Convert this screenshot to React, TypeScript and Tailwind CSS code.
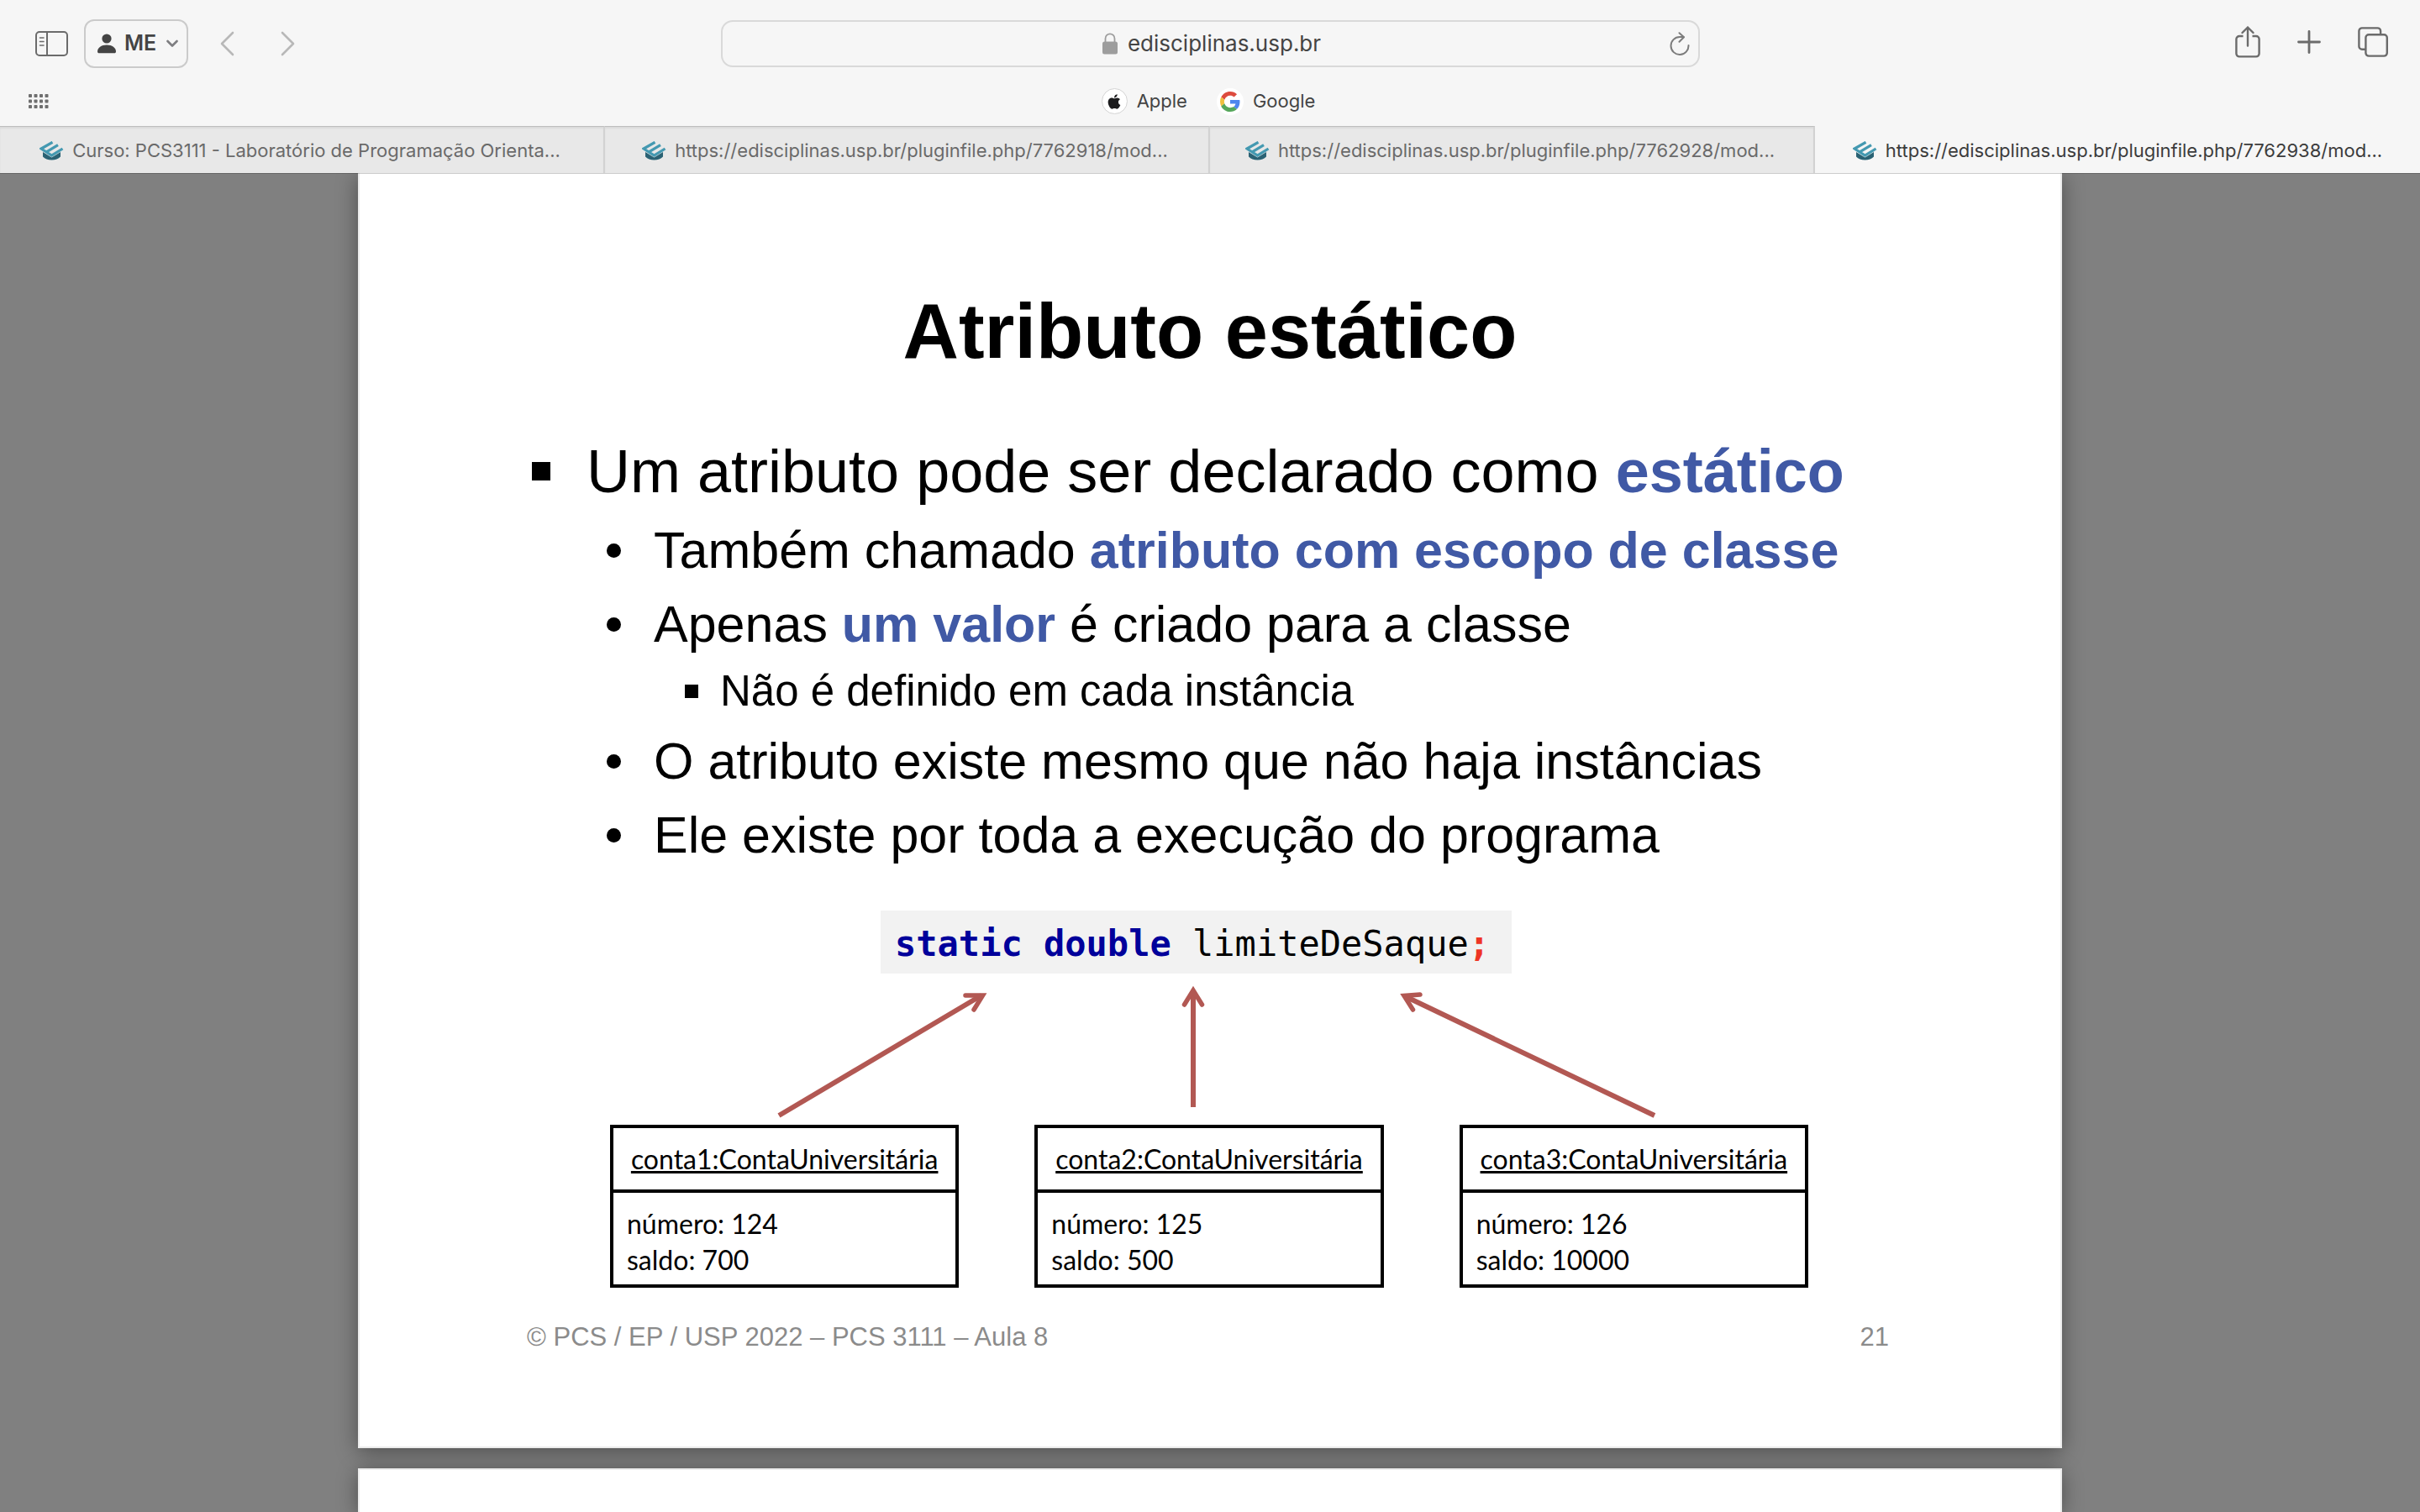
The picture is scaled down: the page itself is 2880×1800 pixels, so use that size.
import type { ReactNode } from 'react';

const tabs = [
  { title: 'Curso: PCS3111 - Laboratório de Programação Orienta...', active: false },
  { title: 'https://edisciplinas.usp.br/pluginfile.php/7762918/mod...', active: false },
  { title: 'https://edisciplinas.usp.br/pluginfile.php/7762928/mod...', active: false },
  { title: 'https://edisciplinas.usp.br/pluginfile.php/7762938/mod...', active: true },
];

const accounts = [
  { name: 'conta1:ContaUniversitária', numero: 124, saldo: 700 },
  { name: 'conta2:ContaUniversitária', numero: 125, saldo: 500 },
  { name: 'conta3:ContaUniversitária', numero: 126, saldo: 10000 },
];

function SidebarIcon() {
  return (
    <svg width="39" height="30" viewBox="0 0 39 30" fill="none" stroke="#6b6b6b" strokeWidth="2" strokeLinecap="round">
      <rect x="1" y="1" width="37" height="28" rx="4" />
      <path d="M14 1v28" />
      <path d="M5.5 8h4.5M5.5 12.500h4.500M5.500 17h4.500" strokeWidth="1.600" />
    </svg>
  );
}

function PersonIcon() {
  return (
    <svg width="22" height="24" viewBox="0 0 22 24" fill="#444">
      <circle cx="11" cy="6" r="5.600" />
      <path d="M0 21.500C0 17 4.500 13.600 11 13.600S22 17 22 21.500c0 1.200-.8 1.800-2 1.800H2c-1.200 0-2-.6-2-1.800z" />
    </svg>
  );
}

function SmallChevron() {
  return (
    <svg width="14" height="10" viewBox="0 0 14 10" fill="none" stroke="#7d7d80" strokeWidth="2.600" strokeLinecap="round" strokeLinejoin="round">
      <path d="M1.500 2 7 7.500 12.500 2" />
    </svg>
  );
}

function NavChevron({ forward = false }: { forward?: boolean }) {
  return (
    <svg width="17" height="30" viewBox="0 0 17 30" fill="none" stroke="#b8b8b8" strokeWidth="2.600" strokeLinecap="round" strokeLinejoin="round">
      <path d={forward ? 'M2 2l13 13L2 28' : 'M15 2 2 15l13 13'} />
    </svg>
  );
}

function LockIcon() {
  return (
    <svg width="18" height="26" viewBox="0 0 18 26">
      <rect x="0" y="10.500" width="18" height="15" rx="2.500" fill="#9d9d9d" />
      <path d="M3.500 11V7a5.500 5.700 0 0 1 11 0v4" fill="none" stroke="#9d9d9d" strokeWidth="1.800" />
    </svg>
  );
}

function ReloadIcon() {
  return (
    <svg width="24" height="28" viewBox="0 0 24 28" fill="none" stroke="#7c7c7c" strokeWidth="2" strokeLinecap="round" strokeLinejoin="round">
      <path d="M22.500 16A10.500 10.500 0 1 1 12 6h4.500" />
      <path d="M11.500 1.200 17 6.300l-5.500 5.500" />
    </svg>
  );
}

function ShareIcon() {
  return (
    <svg width="30" height="38" viewBox="0 0 30 38" fill="none" stroke="#6b6b6b" strokeWidth="2.400" strokeLinecap="round" strokeLinejoin="round">
      <path d="M9.500 12H5a3.600 3.600 0 0 0-3.600 3.600v17.200A3.600 3.600 0 0 0 5 36.400h20a3.600 3.600 0 0 0 3.600-3.600V15.600A3.600 3.600 0 0 0 25 12h-4.500" strokeLinecap="butt" />
      <path d="M15 23.500V1.500M8.500 8 15 1.500 21.500 8" />
    </svg>
  );
}

function PlusIcon() {
  return (
    <svg width="28" height="28" viewBox="0 0 28 28" fill="none" stroke="#6b6b6b" strokeWidth="2.800" strokeLinecap="round">
      <path d="M14 1.500v25M1.500 14h25" />
    </svg>
  );
}

function OverviewIcon() {
  return (
    <svg width="36" height="36" viewBox="0 0 36 36" fill="none" stroke="#6b6b6b" strokeWidth="2.400">
      <path d="M9 26.800H5a3.600 3.600 0 0 1-3.600-3.600V5A3.600 3.600 0 0 1 5 1.400h18.500A3.600 3.600 0 0 1 27.100 5v4" />
      <rect x="9.400" y="9.200" width="25.400" height="25.400" rx="3.600" />
    </svg>
  );
}

function BookmarksGridIcon() {
  return (
    <svg width="24" height="18" viewBox="0 0 24 18" fill="#6f6f6f">
      {[0, 6.5, 13, 19.5].map((x) =>
        [0, 6.5, 13].map((y) => <rect key={`${x}-${y}`} x={x} y={y} width="4" height="4" rx="0.800" />),
      )}
    </svg>
  );
}

function AppleIcon() {
  return (
    <span className="flex size-[31px] items-center justify-center rounded-full border border-[#d4d4d4] bg-white">
      <svg width="16" height="20" viewBox="0 0 384 512" fill="#1b1b1d">
        <path d="M318.700 268.700c-.2-36.700 16.400-64.400 50-84.800-18.800-26.900-47.200-41.700-84.700-44.600-35.500-2.800-74.300 20.700-88.500 20.700-15 0-49.400-19.700-76.400-19.700C63.300 141.200 4 184.800 4 273.500q0 39.300 14.400 81.200c12.800 36.700 59 126.700 107.200 125.200 25.200-.6 43-17.900 75.800-17.900 31.800 0 48.300 17.900 76.400 17.900 48.600-.7 90.400-82.500 102.600-119.300-65.200-30.700-61.700-90-61.700-91.900zm-56.600-164.200c27.300-32.400 24.800-61.900 24-72.500-24.100 1.400-52 16.400-67.900 34.900-17.500 19.800-27.800 44.300-25.600 71.900 26.100 2 49.900-11.400 69.500-34.300z" />
      </svg>
    </span>
  );
}

function GoogleIcon() {
  return (
    <span className="flex size-8 items-center justify-center rounded-full bg-white">
      <svg width="24" height="24" viewBox="0 0 48 48">
        <path fill="#dd4b3e" d="M24 9.500c3.540 0 6.710 1.220 9.210 3.600l6.850-6.850C35.900 2.380 30.470 0 24 0 14.620 0 6.510 5.380 2.560 13.220l7.980 6.190C12.430 13.720 17.740 9.500 24 9.500z" />
        <path fill="#4e86ee" d="M46.980 24.550c0-1.570-.15-3.090-.38-4.550H24v9.020h12.940c-.58 2.960-2.260 5.480-4.780 7.180l7.730 6c4.510-4.180 7.090-10.360 7.090-17.650z" />
        <path fill="#efbf3e" d="M10.530 28.590c-.48-1.450-.76-2.990-.76-4.590s.27-3.140.76-4.590l-7.980-6.190C.92 16.460 0 20.120 0 24c0 3.880.92 7.540 2.560 10.780l7.970-6.190z" />
        <path fill="#55a65a" d="M24 48c6.480 0 11.930-2.130 15.890-5.810l-7.730-6c-2.150 1.450-4.920 2.300-8.160 2.300-6.260 0-11.570-4.220-13.470-9.910l-7.980 6.190C6.510 42.620 14.620 48 24 48z" />
      </svg>
    </span>
  );
}

function SiteIcon() {
  return (
    <svg className="shrink-0" width="29" height="23" viewBox="0 0 29 23">
      <path d="M4 13v5.500C6.500 21.400 10 22.500 14.500 22.500s8-1.100 10.500-4V13l-10.500 6.500z" fill="#2a6274" />
      <path d="M15.500 1.300 2 9l12.500 8.200L27.500 9M8.300 12.900 22 4.600" fill="none" stroke="#4499b1" strokeWidth="3.200" />
    </svg>
  );
}

function Chrome() {
  return (
    <header className="relative z-10 bg-[#f6f6f6] font-['Inter',sans-serif] text-[#444] shadow-[0_1px_0_rgba(0,0,0,0.2)]">
      <div className="grid h-[104px] grid-cols-[1fr_minmax(0,1165px)_1fr] items-center">
        <div className="flex items-center pb-px pl-[42px]">
          <button aria-label="Barra lateral"><SidebarIcon /></button>
          <button className="ml-[19px] flex h-[58px] items-center rounded-xl border-2 border-[#cbcbcb] pr-2.5 pl-3.5 text-[25px] font-semibold">
            <PersonIcon />
            <span className="mr-3 ml-2.5">ME</span>
            <SmallChevron />
          </button>
          <button aria-label="Voltar" className="ml-[38px]"><NavChevron /></button>
          <button aria-label="Avançar" className="ml-[55px]"><NavChevron forward /></button>
        </div>
        <div className="grid h-14 grid-cols-[1fr_auto_1fr] items-center rounded-[14px] border-2 border-[#d9d9d9] px-2.5">
          <label className="col-start-2 flex items-center gap-3 pl-1">
            <LockIcon />
            <input aria-label="Endereço" defaultValue="edisciplinas.usp.br" className="field-sizing-content bg-transparent text-[26px] leading-8 outline-none" />
          </label>
          <button aria-label="Recarregar" className="justify-self-end"><ReloadIcon /></button>
        </div>
        <div className="flex items-center justify-end gap-11 pr-[38px] pb-1">
          <button aria-label="Compartilhar"><ShareIcon /></button>
          <button aria-label="Nova aba"><PlusIcon /></button>
          <button aria-label="Visão geral das abas"><OverviewIcon /></button>
        </div>
      </div>
      <nav className="grid h-[46px] grid-cols-[1fr_auto_1fr] items-center pr-[38px] pb-4 pl-[34px] text-[22px]">
        <button aria-label="Favoritos" className="justify-self-start"><BookmarksGridIcon /></button>
        <div className="flex items-center gap-[35px]">
          <a href="#apple" className="flex items-center gap-[11px]"><AppleIcon />Apple</a>
          <a href="#google" className="flex items-center gap-[11px]"><GoogleIcon />Google</a>
        </div>
      </nav>
      <div role="tablist" className="grid h-14 grid-cols-4 text-[22px]">
        {tabs.map((tab) => (
          <button
            key={tab.title}
            role="tab"
            aria-selected={tab.active}
            className={
              tab.active
                ? 'flex min-w-0 items-center justify-center gap-2.5 px-8 pt-0.5 text-[#3c3c3c]'
                : 'flex min-w-0 items-center justify-center gap-2.5 border-t border-r-2 border-t-[#bdbdbd] border-r-[#d2d2d2] bg-[#e8e8e8] pt-px pr-8 pl-7 text-[#6a6a6a] shadow-[inset_0_2px_2px_rgba(0,0,0,0.06)]'
            }
          >
            <SiteIcon />
            <span className="truncate">{tab.title}</span>
          </button>
        ))}
      </div>
    </header>
  );
}

function Key({ children }: { children: ReactNode }) {
  return <strong className="font-bold text-[#4059a5]">{children}</strong>;
}

function Point({ children }: { children: ReactNode }) {
  return (
    <div className="flex items-center gap-[39px] pl-[294px] text-[61px] leading-[88px]">
      <span className="size-[17px] shrink-0 rounded-full bg-black" />
      <p>{children}</p>
    </div>
  );
}

function Arrows() {
  return (
    <svg className="block w-full" viewBox="0 0 1426 180" fill="none" stroke="#b25853" strokeWidth="6">
      <path d="M201 169 442 26M694 159V24M1243 169 948 28" />
      <g strokeWidth="5.500" strokeLinecap="round" strokeMiterlimit="8">
        <path d="M423 26h20.500L433 43" />
        <path d="M683.500 37 694 20l10.500 17" />
        <path d="M964 25l-19 1.500L955.500 43" />
      </g>
    </svg>
  );
}

function Slide() {
  return (
    <article className="mx-auto w-full max-w-[2028px] shrink-0 border-2 border-t-0 border-[#ececec] bg-white pt-[138px] pb-[110px] font-['Liberation_Sans',Arial,sans-serif] text-black shadow-[0_4px_24px_rgba(0,0,0,0.4)]">
      <h1 className="text-center text-[92px] leading-[100px] font-bold">Atributo estático</h1>
      <ul className="mt-[75px]">
        <li>
          <div className="mb-2 flex items-center gap-[43px] pl-[205px] text-[72px] leading-[84px]">
            <span className="size-[22px] shrink-0 bg-black" />
            <p>Um atributo pode ser declarado como <Key>estático</Key></p>
          </div>
          <ul>
            <li><Point>Também chamado <Key>atributo com escopo de classe</Key></Point></li>
            <li>
              <Point>Apenas <Key>um valor</Key> é criado para a classe</Point>
              <ul>
                <li className="mb-1 flex items-center gap-[26px] pl-[387px] text-[51px] leading-[71px]">
                  <span className="size-4 shrink-0 bg-black" />
                  <p>Não é definido em cada instância</p>
                </li>
              </ul>
            </li>
            <li><Point>O atributo existe mesmo que não haja instâncias</Point></li>
            <li><Point>Ele existe por toda a execução do programa</Point></li>
          </ul>
        </li>
      </ul>
      <section className="mt-[46px] pr-[300px] pl-[298px]">
        <pre className="ml-[322px] w-fit bg-[#f2f2f2] pt-1 pr-[26px] pl-[17px] font-['DejaVu_Sans_Mono',monospace] text-[42px] leading-[71px]">
          <code className="font-['DejaVu_Sans_Mono',monospace]"><b className="text-[#00009b]">static double</b> limiteDeSaque<b className="text-[#ee3524]">;</b></code>
        </pre>
        <Arrows />
        <div className="grid grid-cols-3 gap-[90px] font-['Lato',sans-serif] text-[32px]">
          {accounts.map((account) => (
            <div key={account.name} className="border-4 border-black">
              <h2 className="border-b-4 border-black text-center leading-[73px] underline decoration-3 underline-offset-2 [text-decoration-skip-ink:none]">{account.name}</h2>
              <div className="px-4 pt-[15px] pb-2 leading-[43px]">
                <p>número: {account.numero}</p>
                <p>saldo: {account.saldo}</p>
              </div>
            </div>
          ))}
        </div>
      </section>
      <footer className="mt-[39px] flex justify-between pr-[204px] pl-[199px] text-[31px] leading-10 text-[#8b8b8b]">
        <span>© PCS / EP / USP 2022 – PCS 3111 – Aula 8</span>
        <span>21</span>
      </footer>
    </article>
  );
}

export default function App() {
  return (
    <div className="flex h-screen flex-col overflow-hidden bg-[#808080]">
      <Chrome />
      <main className="flex min-h-0 flex-1 flex-col gap-6 overflow-hidden">
        <Slide />
        <div className="mx-auto w-full max-w-[2028px] flex-1 border-2 border-b-0 border-[#ececec] bg-white shadow-[0_4px_24px_rgba(0,0,0,0.4)]" />
      </main>
    </div>
  );
}
